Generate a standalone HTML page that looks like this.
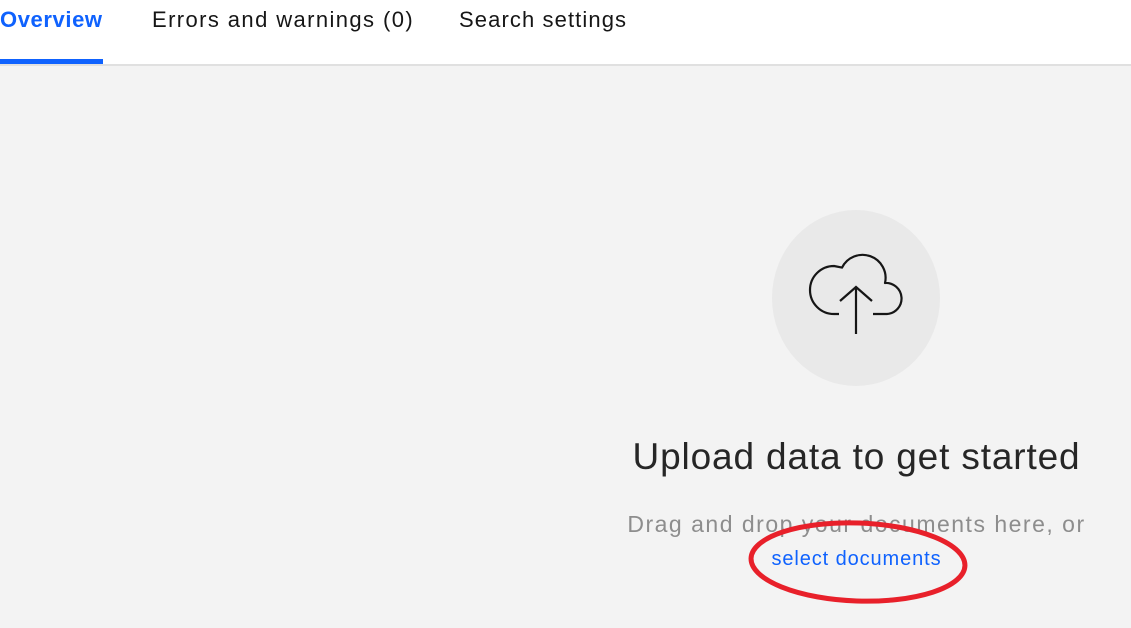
<!DOCTYPE html>
<html><head><style>
body{margin:0;width:1131px;height:628px;overflow:hidden;background:#f3f3f3;font-family:"Liberation Sans",sans-serif;position:relative}
.hdr{position:absolute;left:0;top:0;width:1131px;height:64px;background:#fff;border-bottom:2px solid #e0e0e0}
.tab{position:absolute;top:6px;font-size:22px;color:#161616;white-space:nowrap;line-height:28px}
.ul{position:absolute;left:0;top:59px;width:103px;height:5px;background:#0f62fe}
.t{position:absolute;left:285px;width:1143px;text-align:center;white-space:nowrap}
</style></head><body>
<div class="hdr">
<span class="tab" style="left:0px;color:#0f62fe;font-weight:bold;letter-spacing:0.6px">Overview</span>
<span class="tab" style="left:152px;letter-spacing:1.4px">Errors and warnings (0)</span>
<span class="tab" style="left:459px;letter-spacing:1.1px">Search settings</span>
<div class="ul"></div>
</div>
<svg style="position:absolute;left:0;top:0" width="1131" height="628">
<ellipse cx="856" cy="298" rx="84" ry="88" fill="#e9e9e9"/>
<path d="M839,314 L834,314 A24,24 0 0 1 834,266 L842,267.6 A23,23 0 0 1 885,283 A15,15 0 1 1 887,314 L873,314" fill="none" stroke="#161616" stroke-width="2.2" stroke-linejoin="round"/>
<path d="M856,334 V287 M840,301 L856,287 L872,301" fill="none" stroke="#161616" stroke-width="2.2"/>
</svg>
<div class="t" style="top:436px;font-size:37px;color:#262626;letter-spacing:0.85px">Upload data to get started</div>
<div class="t" style="top:511px;font-size:23px;color:#8d8d8d;letter-spacing:1.5px">Drag and drop your documents here, or</div>
<div class="t" style="top:548px;font-size:20px;color:#0f62fe;letter-spacing:0.9px">select documents</div>
<svg style="position:absolute;left:0;top:0" width="1131" height="628">
<ellipse cx="858" cy="562" rx="107" ry="39" fill="none" stroke="#e8202a" stroke-width="5" transform="rotate(2 858 562)"/>
</svg>
</body></html>
